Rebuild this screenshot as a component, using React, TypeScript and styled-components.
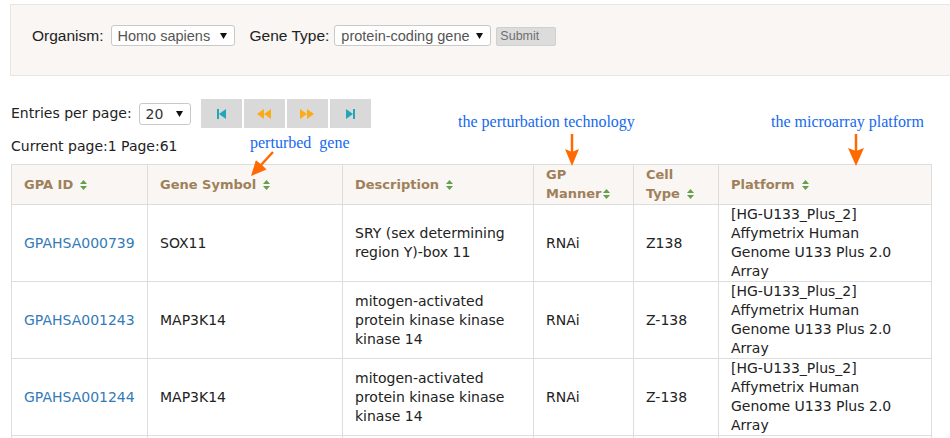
import React from "react";
import styled, { createGlobalStyle } from "styled-components";

const Global = createGlobalStyle`
  html, body { margin: 0; padding: 0; overflow: hidden; background: #fff; }
  body { font-family: "DejaVu Sans", Verdana, sans-serif; font-size: 14px; color: #333; }
`;

const Page = styled.div`
  position: relative;
  width: 950px;
  height: 438px;
  overflow: hidden;
  padding-top: 4px;
  box-sizing: border-box;
`;

const FilterBar = styled.div`
  margin-left: 10px;
  width: 960px;
  height: 72px;
  box-sizing: border-box;
  background: #f9f6f3;
  border: 1px solid #ebe5df;
  border-right: none;
  display: flex;
  align-items: flex-start;
  padding: 20px 0 0 21px;
  font-family: "Liberation Sans", Arial, sans-serif;
  font-size: 15.5px;
  color: #222;
`;

const FieldLabel = styled.span<{ $ml?: number; $mr?: number }>`
  height: 21px;
  line-height: 21px;
  margin-left: ${(p) => p.$ml ?? 0}px;
  margin-right: ${(p) => p.$mr ?? 0}px;
`;

const SelectBox = styled.div<{ $w: number; $h: number; $font: string; $size: number; $color: string }>`
  width: ${(p) => p.$w}px;
  height: ${(p) => p.$h}px;
  box-sizing: border-box;
  border: 1px solid #c9c9c9;
  border-radius: 3px;
  background: #fff;
  display: flex;
  align-items: center;
  justify-content: space-between;
  padding: 0 7px 0 6px;
  font-family: ${(p) => p.$font};
  font-size: ${(p) => p.$size}px;
  color: ${(p) => p.$color};
  white-space: nowrap;
`;

const SubmitButton = styled.button`
  margin-left: 5px;
  margin-top: 2px;
  width: 60px;
  height: 19px;
  box-sizing: border-box;
  border: 1px solid #cfcfcf;
  border-radius: 2px;
  background: #dcdcdc;
  color: #6f6f6f;
  font-family: "Liberation Sans", Arial, sans-serif;
  font-size: 12.5px;
  text-align: left;
  padding: 0 0 0 3px;
  line-height: 17px;
`;

const ControlsRow = styled.div`
  margin: 23px 0 0 11px;
  height: 29px;
  display: flex;
  align-items: center;
  color: #222;
`;

const Pager = styled.div`
  margin-left: 10px;
  display: flex;
  gap: 2px;
`;

const PagerButton = styled.div`
  width: 41px;
  height: 29px;
  background: #d9d9d9;
  display: flex;
  align-items: center;
  justify-content: center;
`;

const CurrentPage = styled.div`
  margin: 8px 0 0 11px;
  line-height: 20px;
  color: #222;
`;

const Table = styled.table`
  margin: 8px 0 0 11px;
  border-collapse: collapse;
  table-layout: fixed;
  width: 920px;
`;

const Th = styled.th`
  background: #f9f6f3;
  color: #a0805a;
  font-weight: bold;
  font-size: 13px;
  text-align: left;
  padding: 0 12px;
  line-height: 19px;
  height: 38px;
  border: 1px solid #ddd;
  vertical-align: middle;
`;

const Td = styled.td`
  padding: 0 12px;
  line-height: 19px;
  border: 1px solid #ddd;
  vertical-align: middle;
  color: #222;
`;

const SpacerCell = styled.td`
  height: 19px;
  border: 1px solid #ddd;
`;

const IdLink = styled.a`
  color: #337ab7;
  text-decoration: none;
`;

const SortIconWrap = styled.span<{ $tight?: boolean }>`
  display: inline-block;
  margin-left: ${(p) => (p.$tight ? 2 : 7)}px;
  vertical-align: -1px;
`;

const Note = styled.span<{ $x: number; $y: number }>`
  position: absolute;
  left: ${(p) => p.$x}px;
  top: ${(p) => p.$y}px;
  font-family: "Liberation Serif", "Times New Roman", serif;
  font-size: 16px;
  line-height: 20px;
  color: #1569ee;
  white-space: pre;
`;

const ArrowLayer = styled.svg`
  position: absolute;
  left: 0;
  top: 0;
  pointer-events: none;
`;

const Caret = () => (
  <svg width="7" height="6" viewBox="0 0 7 6">
    <polygon points="0,0 7,0 3.5,6" fill="#111" />
  </svg>
);

const SortIcon = ({ tight }: { tight?: boolean }) => (
  <SortIconWrap $tight={tight}>
    <svg width="7" height="10" viewBox="0 0 7 10">
      <polygon points="3.5,0 7,4 0,4" fill="#62a04a" />
      <polygon points="0,6 7,6 3.5,10" fill="#62a04a" />
    </svg>
  </SortIconWrap>
);

const TEAL = "#22a6b8";
const ORANGE = "#fbab18";

const FirstIcon = () => (
  <svg width="9" height="10" viewBox="0 0 9 10">
    <rect x="0" y="0" width="2" height="10" fill={TEAL} />
    <polygon points="9,0 9,10 2,5" fill={TEAL} />
  </svg>
);
const PrevIcon = () => (
  <svg width="14" height="10" viewBox="0 0 14 10">
    <polygon points="7,0 7,10 0,5" fill={ORANGE} />
    <polygon points="14,0 14,10 7,5" fill={ORANGE} />
  </svg>
);
const NextIcon = () => (
  <svg width="14" height="10" viewBox="0 0 14 10">
    <polygon points="0,0 7,5 0,10" fill={ORANGE} />
    <polygon points="7,0 14,5 7,10" fill={ORANGE} />
  </svg>
);
const LastIcon = () => (
  <svg width="9" height="10" viewBox="0 0 9 10">
    <polygon points="0,0 7,5 0,10" fill={TEAL} />
    <rect x="7" y="0" width="2" height="10" fill={TEAL} />
  </svg>
);

type Row = { id: string; symbol: string; desc: string; manner: string; cell: string; platform: string };

const PLATFORM = "[HG-U133_Plus_2] Affymetrix Human Genome U133 Plus 2.0 Array";

const rows: Row[] = [
  { id: "GPAHSA000739", symbol: "SOX11", desc: "SRY (sex determining region Y)-box 11", manner: "RNAi", cell: "Z138", platform: PLATFORM },
  { id: "GPAHSA001243", symbol: "MAP3K14", desc: "mitogen-activated protein kinase kinase kinase 14", manner: "RNAi", cell: "Z-138", platform: PLATFORM },
  { id: "GPAHSA001244", symbol: "MAP3K14", desc: "mitogen-activated protein kinase kinase kinase 14", manner: "RNAi", cell: "Z-138", platform: PLATFORM },
];

const ARROW = "#ff6a00";

export default function App() {
  return (
    <Page>
      <Global />
      <FilterBar>
        <FieldLabel $mr={7}>Organism:</FieldLabel>
        <SelectBox $w={124} $h={21} $font={'"Liberation Sans", Arial, sans-serif'} $size={14.5} $color="#555">
          <span>Homo sapiens</span>
          <Caret />
        </SelectBox>
        <FieldLabel $ml={15} $mr={5}>Gene Type:</FieldLabel>
        <SelectBox $w={157} $h={21} $font={'"Liberation Sans", Arial, sans-serif'} $size={14.5} $color="#555">
          <span>protein-coding gene</span>
          <Caret />
        </SelectBox>
        <SubmitButton>Submit</SubmitButton>
      </FilterBar>

      <ControlsRow>
        <FieldLabel $mr={7}>Entries per page:</FieldLabel>
        <SelectBox $w={52} $h={22} $font={'"DejaVu Sans", Verdana, sans-serif'} $size={14} $color="#333">
          <span>20</span>
          <Caret />
        </SelectBox>
        <Pager>
          <PagerButton><FirstIcon /></PagerButton>
          <PagerButton><PrevIcon /></PagerButton>
          <PagerButton><NextIcon /></PagerButton>
          <PagerButton><LastIcon /></PagerButton>
        </Pager>
      </ControlsRow>

      <CurrentPage>Current page:1 Page:61</CurrentPage>

      <Table>
        <colgroup>
          <col style={{ width: 136 }} />
          <col style={{ width: 195 }} />
          <col style={{ width: 191 }} />
          <col style={{ width: 100 }} />
          <col style={{ width: 85 }} />
          <col style={{ width: 213 }} />
        </colgroup>
        <thead>
          <tr>
            <Th>GPA ID<SortIcon /></Th>
            <Th>Gene Symbol<SortIcon /></Th>
            <Th>Description<SortIcon /></Th>
            <Th>GP Manner<SortIcon tight /></Th>
            <Th>Cell Type<SortIcon /></Th>
            <Th>Platform<SortIcon /></Th>
          </tr>
        </thead>
        <tbody>
          {rows.map((r) => (
            <tr key={r.id}>
              <Td><IdLink href="#">{r.id}</IdLink></Td>
              <Td>{r.symbol}</Td>
              <Td>{r.desc}</Td>
              <Td>{r.manner}</Td>
              <Td>{r.cell}</Td>
              <Td>{r.platform}</Td>
            </tr>
          ))}
          <tr>
            <SpacerCell />
            <SpacerCell />
            <SpacerCell />
            <SpacerCell />
            <SpacerCell />
            <SpacerCell />
          </tr>
        </tbody>
      </Table>

      <Note $x={458} $y={112}>the perturbation technology</Note>
      <Note $x={771} $y={112}>the microarray platform</Note>
      <Note $x={250} $y={133}>{"perturbed  gene"}</Note>

      <ArrowLayer width="950" height="438" viewBox="0 0 950 438">
        <line x1="572" y1="134" x2="572" y2="152" stroke={ARROW} strokeWidth="2.5" />
        <polygon points="565,149 572,152 579,149 572,166" fill={ARROW} />
        <line x1="856" y1="134" x2="856" y2="151" stroke={ARROW} strokeWidth="2.5" />
        <polygon points="848,148 856,151 864,148 856,166" fill={ARROW} />
        <line x1="273" y1="152" x2="261" y2="165" stroke={ARROW} strokeWidth="2.5" />
        <polygon points="266.5,169.5 262,165 255.9,160.2 251,176" fill={ARROW} />
      </ArrowLayer>
    </Page>
  );
}
